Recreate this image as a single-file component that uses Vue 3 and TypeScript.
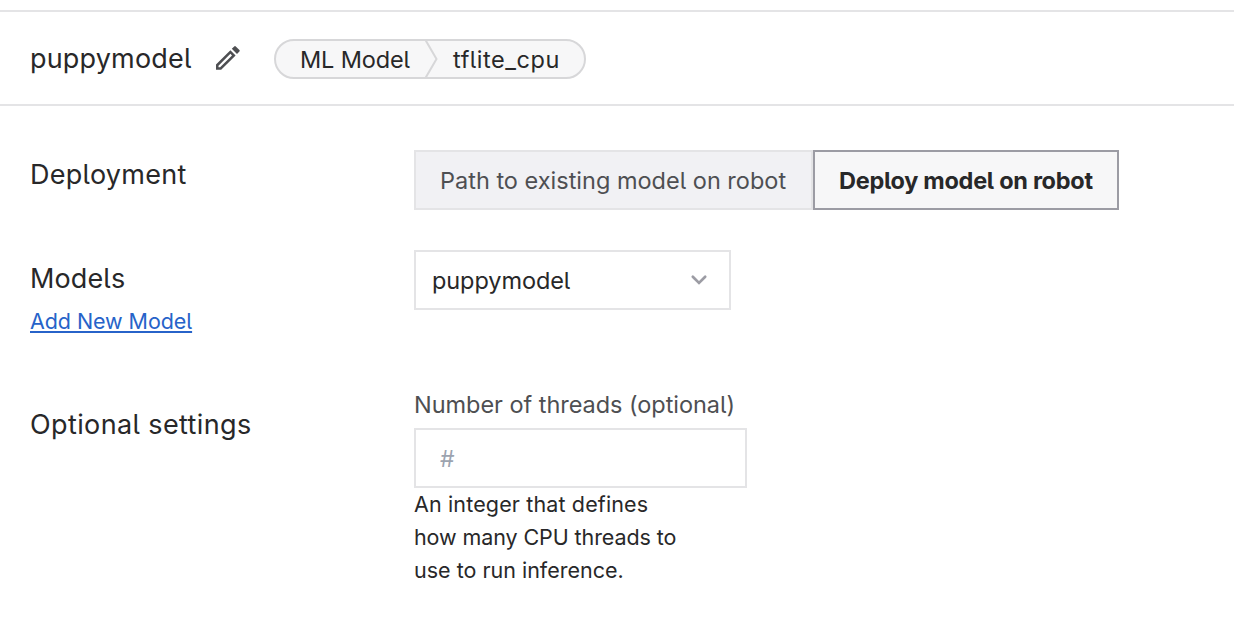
<script setup lang="ts">
import { ref } from 'vue'

type DeploymentMode = 'existing' | 'deploy'

const modelName = 'puppymodel'
const mode = ref<DeploymentMode>('deploy')
const threads = ref('')
const options: { id: DeploymentMode; label: string }[] = [
  { id: 'existing', label: 'Path to existing model on robot' },
  { id: 'deploy', label: 'Deploy model on robot' },
]
</script>

<template>
  <main class="panel">
    <header class="header">
      <h1 class="title">{{ modelName }}</h1>
      <button class="edit" aria-label="Edit name">
        <svg width="26" height="26" viewBox="0 0 26 26">
          <path class="ink" fill-rule="evenodd" d="M1 19.6 15.4 5.2 20.6 10.4 6.2 24.8H1ZM3.5 20.7V22.3H5.1L17 10.4 15.4 8.8Z" />
          <path class="ink" d="M16.8 3.8 19.2 1.4Q20 .6 20.8 1.4L24.4 5Q25.2 5.8 24.4 6.6L22 9Z" />
        </svg>
      </button>
      <div class="crumbs">
        <span class="crumb type">ML Model</span>
        <svg class="divider" width="14" height="36" viewBox="0 0 14 36">
          <path d="M.5 -1 11.5 18 .5 37" />
        </svg>
        <span class="crumb kind">tflite_cpu</span>
      </div>
    </header>

    <section class="row deployment">
      <h2 class="label">Deployment</h2>
      <div class="toggle">
        <button
          v-for="option in options"
          :key="option.id"
          class="option"
          :class="[option.id, { active: mode === option.id }]"
          @click="mode = option.id"
        >
          {{ option.label }}
        </button>
      </div>
    </section>

    <section class="row models">
      <div>
        <h2 class="label">Models</h2>
        <a class="add" href="#">Add New Model</a>
      </div>
      <div class="select">
        <span>{{ modelName }}</span>
        <svg width="18" height="12" viewBox="0 0 18 12">
          <path d="M2.8 2.7 9 8.9 15.2 2.7" />
        </svg>
      </div>
    </section>

    <section class="row settings">
      <h2 class="label">Optional settings</h2>
      <div>
        <label class="caption" for="threads">Number of threads (optional)</label>
        <input id="threads" v-model="threads" class="field" placeholder="#" />
        <p class="help">
          <span class="first">An integer that defines</span>
          <span class="second">how many CPU threads to</span>
          <span>use to run inference.</span>
        </p>
      </div>
    </section>
  </main>
</template>

<style>
body {
  background: #fff;
}
</style>

<style scoped>
.panel {
  box-sizing: border-box;
  height: 640px;
  padding-top: 10px;
  overflow: hidden;
  color: #282829;
  font-family: Inter, 'Liberation Sans', sans-serif;
  font-feature-settings: 'cv05' 1, 'calt' 0;
  font-size: 23.5px;
  white-space: nowrap;
}
h1,
h2,
p {
  margin: 0;
  font-weight: inherit;
}
button {
  margin: 0;
  padding: 0;
  border: 0;
  background: none;
  font: inherit;
  font-feature-settings: inherit;
  letter-spacing: inherit;
  color: inherit;
}
.header {
  box-sizing: border-box;
  height: 96px;
  display: flex;
  align-items: center;
  padding-left: 30px;
  border-top: 2px solid #e4e4e6;
  border-bottom: 2px solid #e4e4e6;
}
.title {
  width: 185px;
  padding-top: 2px;
  font-size: 27px;
  line-height: 40px;
  letter-spacing: 0.18px;
}
.edit {
  width: 26px;
  height: 26px;
  margin-right: 33px;
}
.edit svg {
  display: block;
}
.ink {
  fill: #4e4f52;
}
.crumbs {
  box-sizing: border-box;
  width: 312px;
  height: 40px;
  display: flex;
  align-items: center;
  border: 2px solid #d7d7d9;
  border-radius: 20px;
  background: #f7f7f8;
  margin-top: 2px;
}
.crumb {
  padding-top: 2px;
  line-height: 34px;
}
.type {
  box-sizing: border-box;
  width: 149px;
  padding-left: 24px;
  letter-spacing: -0.14px;
}
.divider {
  margin-right: 14px;
}
.kind {
  letter-spacing: 0.53px;
}
.divider path {
  fill: none;
  stroke: #d7d7d9;
  stroke-width: 2;
}
.row {
  display: grid;
  grid-template-columns: 384px max-content;
  align-items: start;
  padding-left: 30px;
}
.label {
  font-size: 27px;
  line-height: 40px;
}
.deployment {
  padding-top: 44px;
}
.deployment .label {
  margin-top: 5px;
  letter-spacing: 0.28px;
}
.toggle {
  display: flex;
}
.option {
  box-sizing: border-box;
  width: 399px;
  height: 60px;
  border: 2px solid #e4e4e6;
  background: #f1f1f4;
  color: #4e4f52;
  text-align: left;
  padding-left: 24px;
}
.option.deploy {
  width: 306px;
}
.option.active {
  border-color: #9c9ca4;
  background: #f7f7f8;
  color: #282829;
  font-weight: 700;
  letter-spacing: -0.28px;
}
.models {
  margin-top: 40px;
  height: 138px;
}
.models .label {
  margin-top: 9px;
  letter-spacing: 0.12px;
}
.add {
  display: block;
  width: max-content;
  margin-top: 6px;
  color: #2763c9;
  font-size: 21.5px;
  line-height: 32px;
  letter-spacing: -0.08px;
  text-decoration: underline;
  text-decoration-thickness: 2px;
  text-underline-offset: 2px;
}
.select {
  box-sizing: border-box;
  width: 317px;
  height: 60px;
  display: flex;
  align-items: center;
  justify-content: space-between;
  padding: 0 21px 0 16px;
  border: 2px solid #e4e4e6;
  letter-spacing: -0.08px;
}
.select path {
  fill: none;
  stroke: #9c9ca4;
  stroke-width: 2.7;
  stroke-linecap: round;
}
.settings .label {
  margin-top: 17px;
  letter-spacing: 0.38px;
}
.caption {
  display: block;
  height: 40px;
  line-height: 34px;
  color: #4e4f52;
  letter-spacing: -0.04px;
}
.field {
  box-sizing: border-box;
  display: block;
  width: 333px;
  height: 60px;
  padding: 2px 24px 0;
  border: 2px solid #e4e4e6;
  border-radius: 0;
  outline: none;
  background: #fff;
  color: inherit;
  font: inherit;
  font-size: 23px;
}
.field::placeholder {
  color: #9ca3af;
}
.help {
  font-size: 21.5px;
  line-height: 33px;
}
.help span {
  display: block;
  width: max-content;
}
.help .first {
  letter-spacing: 0.14px;
}
.help .second {
  letter-spacing: -0.09px;
}
</style>
